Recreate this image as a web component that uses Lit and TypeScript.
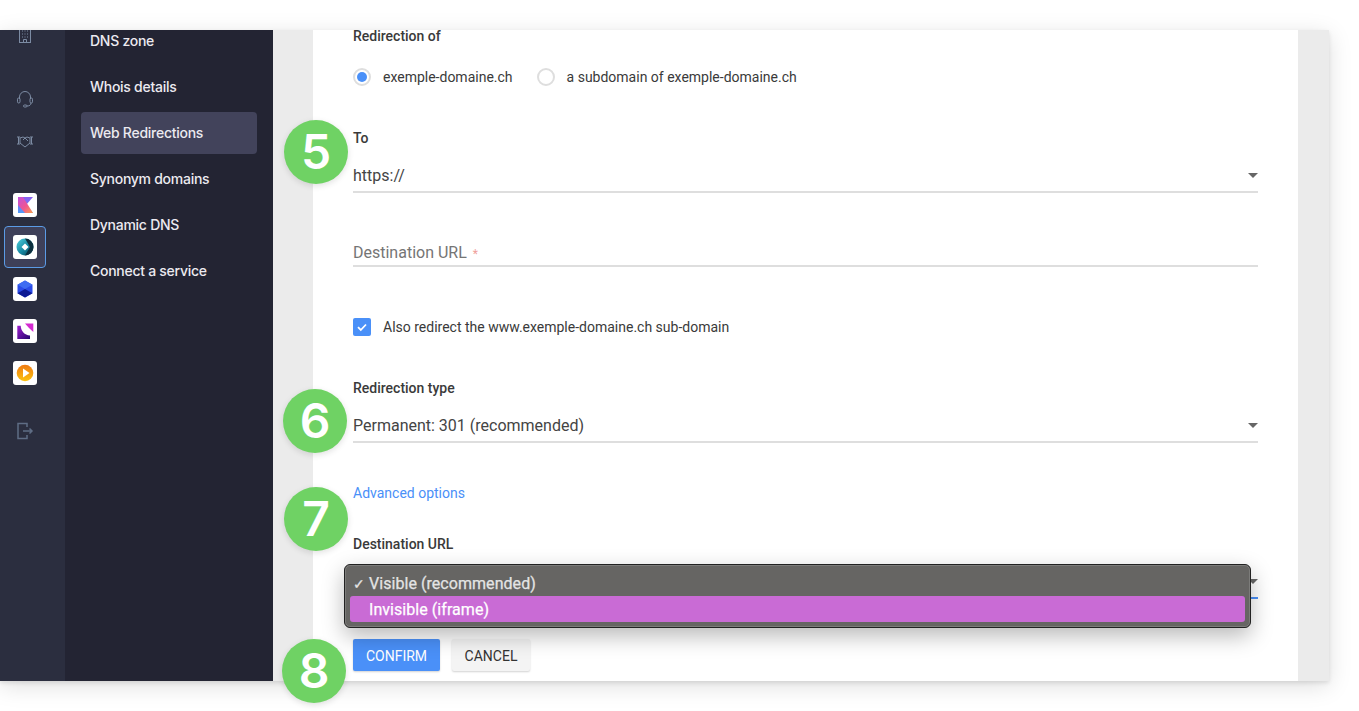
import { LitElement, html, css, svg } from "lit";
import { customElement } from "lit/decorators.js";

const caret = html`<span class="caret"></span>`;

@customElement("app-root")
export class AppRoot extends LitElement {
  static styles = css`
    :host { display: block; width: 1359px; height: 711px; position: relative; overflow: hidden; background: #fff; font-family: Roboto, "Liberation Sans", sans-serif; }
    .stage { padding-top: 30px; width: 1329px; }
    .frame { display: flex; height: 651px; overflow: hidden; background: #ebebeb; box-shadow: 0 5px 22px rgba(0,0,0,.13), 0 2px 4px rgba(0,0,0,.1); }
    .rail { width: 65px; flex: none; background: #2b2e3f; overflow: hidden; box-sizing: border-box; padding-left: 4px; }
    .rail-in { margin-top: -15px; display: flex; flex-direction: column; }
    .ri { width: 42px; height: 42px; display: flex; align-items: center; justify-content: center; box-sizing: border-box; border-radius: 4px; }
    .ri svg { display: block; }
    .ri.active { background: #3e4059; border: 1px solid #5b9be6; }
    .tile { width: 24px; height: 24px; background: #fff; border-radius: 3px; display: flex; align-items: center; justify-content: center; }
    .g1 { margin-top: 21px; }
    .g2 { margin-top: 22px; }
    .g3 { margin-top: 16px; }
    .side { width: 208px; flex: none; background: #232433; overflow: hidden; box-sizing: border-box; padding: 0 16px; }
    .side-in { margin-top: -10px; display: flex; flex-direction: column; gap: 4px; }
    .nav { height: 42px; padding-left: 9px; border-radius: 4px; font: 500 14px/42px Inter, "Liberation Sans", sans-serif; color: #eceaf0; letter-spacing: -0.27px; }
    .nav.on { background: #42435b; }
    .gutter { width: 40px; flex: none; }
    .panel { width: 985px; flex: none; background: #fff; box-sizing: border-box; padding: 0 40px; overflow: hidden; color: #3a3a3a; }
    .form { display: flex; flex-direction: column; }
    .label { font-size: 14px; font-weight: 500; height: 16px; line-height: 14px; color: #3a3a3a; }
    .label.first { height: 15px; line-height: 12px; }
    .radios { display: flex; align-items: center; height: 20px; margin-top: 22px; font-size: 14px; }
    .radio { width: 18px; height: 18px; box-sizing: border-box; border: 2px solid #dedede; border-radius: 50%; background: #fff; margin-right: 12px; display: flex; align-items: center; justify-content: center; }
    .radio i { width: 10px; height: 10px; border-radius: 50%; background: #4a90f8; }
    .radio.second { margin-left: 24px; margin-right: 12px; }
    .select { height: 29px; box-sizing: border-box; border-bottom: 2px solid #dedede; display: flex; align-items: flex-start; justify-content: space-between; margin-top: 17px; font-size: 16px; line-height: 24px; color: #444; }
    .select.blue { border-bottom-color: #4a90f8; }
    .caret { width: 0; height: 0; border-left: 5px solid transparent; border-right: 5px solid transparent; border-top: 5px solid #666; margin-top: 9px; }
    .input { height: 26px; box-sizing: border-box; border-bottom: 2px solid #dedede; margin-top: 48px; font-size: 16px; line-height: 24px; color: #757575; }
    .input b { font-weight: 400; color: #f0a09a; font-size: 12px; margin-left: 2px; }
    .check { display: flex; align-items: center; height: 20px; margin-top: 50px; font-size: 14px; }
    .box { width: 18px; height: 18px; background: #4a90f8; border-radius: 2px; margin-right: 12px; display: flex; align-items: center; justify-content: center; }
    .m44 { margin-top: 44px; }
    .link { margin-top: 43px; font-size: 14px; height: 16px; line-height: 14px; color: #4a90f8; }
    .m35 { margin-top: 35px; }
    .btns { display: flex; gap: 12px; margin-top: 40px; }
    .btn { height: 32px; box-sizing: border-box; font-size: 14px; line-height: 34px; text-align: center; border-radius: 2px; box-shadow: 0 1px 2px rgba(0,0,0,.18); }
    .ok { width: 87px; background: #4a90f8; color: #fff; }
    .no { width: 78px; background: #f4f4f4; color: #333; }
    .menu { position: absolute; left: 344px; top: 564px; width: 907px; height: 64px; box-sizing: border-box; background: #666563; border: 1px solid #222; outline: 1px solid rgba(255,255,255,.15); outline-offset: -2px; border-radius: 6px; box-shadow: 0 8px 22px rgba(0,0,0,.28); padding: 5px; font-size: 16px; letter-spacing: 0.05px; -webkit-text-stroke: 0.25px currentColor; color: #e4e4e4; }
    .opt { height: 26px; line-height: 28px; padding-left: 19px; position: relative; white-space: nowrap; }
    .opt.hi { background: #c96bd5; color: #fff; border-radius: 3px; }
    .opt span { position: absolute; left: 3px; font-size: 14px; }
    .num { position: absolute; width: 64px; height: 64px; border-radius: 50%; background: #6fd264; color: #fff; font: 600 48px/64px Inter, "Liberation Sans", sans-serif; text-align: center; box-shadow: 0 2px 6px rgba(0,0,0,.12); }
  `;

  private nums: [string, number, number][] = [
    ["5", 316, 152], ["6", 315, 421], ["7", 316, 519], ["8", 314, 671],
  ];

  private line(stroke: string, body: unknown, size = 18) {
    return html`<svg width=${size} height=${size} viewBox="0 0 18 18" fill="none" stroke=${stroke} stroke-width="1">${body}</svg>`;
  }

  render() {
    const ic = "#7c8ba3";
    return html`
      <div class="stage">
        <div class="frame">
          <div class="rail"><div class="rail-in">
            <div class="ri">${this.line(ic, svg`<rect x="3.500" y="-1" width="11" height="16.500"/><path d="M6 4h1M8.500 4h1M11 4h1M6 7h1M8.500 7h1M11 7h1M6 10h1M8.500 10h1M11 10h1M7.500 15.500v-3h3v3" />`)}</div>
            <div class="ri g1">${this.line(ic, svg`<path d="M3.500 9V7a5.500 5.500 0 0 1 11 0v2"/><rect x="1.500" y="8" width="2.500" height="5" rx="1.200"/><rect x="14" y="8" width="2.500" height="5" rx="1.200"/><path d="M15 13c0 2-1.500 3-4 3"/><rect x="7.500" y="15" width="3.500" height="2" rx="1"/>`)}</div>
            <div class="ri">${this.line(ic, svg`<path d="M1 5h3M1 12h3M14 5h3M14 12h3M2.500 5v7M15.500 5v7M4 6l3-1 2 1 2-1 3 1v5l-5 4-5-4zM7 8l2-2 3 3"/>`)}</div>
            <div class="ri g2"><div class="tile"><svg width="18" height="18" viewBox="0 0 18 18"><defs><linearGradient id="k1" x1="0" y1="0" x2="1" y2="1"><stop offset="0" stop-color="#c050e0"/><stop offset=".55" stop-color="#f0568f"/><stop offset="1" stop-color="#f9a04c"/></linearGradient><linearGradient id="k2" x1="0" y1="0" x2="0" y2="1"><stop offset="0" stop-color="#8a5cf0"/><stop offset="1" stop-color="#4f9cf8"/></linearGradient></defs><path d="M2 1h15L10.500 8.500 17 17H2z" fill="url(#k2)"/><path d="M2 1h5l10 16H9L2 9z" fill="url(#k1)"/></svg></div></div>
            <div class="ri active"><div class="tile"><svg width="18" height="18" viewBox="0 0 18 18"><defs><linearGradient id="d1" x1="0" y1="0" x2="1" y2="1"><stop offset="0" stop-color="#4fd0dc"/><stop offset=".55" stop-color="#1586a0"/><stop offset="1" stop-color="#0b3a4c"/></linearGradient></defs><circle cx="9" cy="9" r="8.500" fill="url(#d1)"/><path d="M9 .5A8.500 8.500 0 0 1 17.500 9 8.500 8.500 0 0 1 9 17.500L14 9z" fill="#0c2f3e"/><path d="M9 5.500L12.500 9 9 12.500 5.500 9z" fill="#fff"/></svg></div></div>
            <div class="ri"><div class="tile"><svg width="18" height="18" viewBox="0 0 18 18"><path d="M9 0.500l7.500 4.200v8.600L9 17.500l-7.500-4.200V4.700z" fill="#2b4be8"/><path d="M1.500 4.700L9 9l7.500-4.300L9 .5z" fill="#3f6cf2"/><path d="M9 9l7.500 4.300L9 17.500l-7.500-4.200z" fill="#0d1a94"/></svg></div></div>
            <div class="ri"><div class="tile"><svg width="18" height="18" viewBox="0 0 18 18"><defs><linearGradient id="l1" x1="0" y1="0" x2="1" y2="1"><stop offset="0" stop-color="#a01fd0"/><stop offset="1" stop-color="#23056e"/></linearGradient></defs><path d="M1.300 3.700h3.400C5 9 8.500 13 14 13.500V17H1.300z" fill="url(#l1)"/><path d="M9 1.500h8.300V10L13 6z" fill="#d42bd0"/></svg></div></div>
            <div class="ri"><div class="tile"><svg width="18" height="18" viewBox="0 0 18 18"><defs><linearGradient id="p1" x1="0" y1="0" x2="0" y2="1"><stop offset="0" stop-color="#f07a13"/><stop offset="1" stop-color="#fcc30f"/></linearGradient></defs><circle cx="9" cy="9" r="8.300" fill="url(#p1)"/><path d="M7 4.500L13.500 9 7 13.500z" fill="#fff"/></svg></div></div>
            <div class="ri g3">${this.line("#5f6d85", svg`<path d="M11 5V1.500H2v15h9V13" stroke-width="1.500"/><path d="M7 9h9M13.500 6.500L16 9l-2.500 2.500" stroke-width="1.500"/>`)}</div>
          </div></div>
          <div class="side"><div class="side-in">
            <div class="nav">DNS zone</div>
            <div class="nav">Whois details</div>
            <div class="nav on">Web Redirections</div>
            <div class="nav">Synonym domains</div>
            <div class="nav">Dynamic DNS</div>
            <div class="nav">Connect a service</div>
          </div></div>
          <div class="gutter"></div>
          <div class="panel"><div class="form">
            <div class="label first">Redirection of</div>
            <div class="radios">
              <div class="radio"><i></i></div>exemple-domaine.ch
              <div class="radio second"></div>a subdomain of exemple-domaine.ch
            </div>
            <div class="label m44">To</div>
            <div class="select"><span>https://</span>${caret}</div>
            <div class="input">Destination URL <b>*</b></div>
            <div class="check">
              <div class="box"><svg width="12" height="12" viewBox="0 0 12 12" fill="none" stroke="#fff" stroke-width="1.800"><path d="M2 6.200l2.800 2.800L10 3.500"/></svg></div>
              Also redirect the www.exemple-domaine.ch sub-domain
            </div>
            <div class="label m44">Redirection type</div>
            <div class="select"><span>Permanent: 301 (recommended)</span>${caret}</div>
            <div class="link">Advanced options</div>
            <div class="label m35">Destination URL</div>
            <div class="select blue"><span></span>${caret}</div>
            <div class="btns">
              <div class="btn ok">CONFIRM</div>
              <div class="btn no">CANCEL</div>
            </div>
          </div></div>
        </div>
      </div>
      <div class="menu">
        <div class="opt"><span>✓</span>Visible (recommended)</div>
        <div class="opt hi">Invisible (iframe)</div>
      </div>
      ${this.nums.map(([n, x, y]) => html`<div class="num" style="left:${x - 32}px;top:${y - 32}px">${n}</div>`)}
    `;
  }
}
